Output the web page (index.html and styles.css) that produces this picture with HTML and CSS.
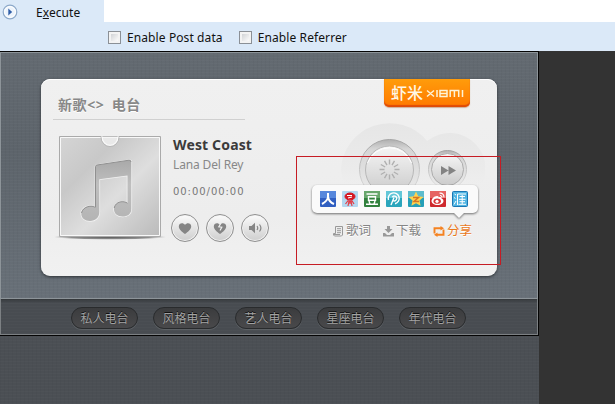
FILE: index.html
```html
<!DOCTYPE html>
<html lang="zh-CN">
<head>
<meta charset="utf-8">
<title>Player</title>
<link rel="stylesheet" href="styles.css">
</head>
<body>
<header class="toolbar">
  <div class="toolbar-main">
    <div class="execute">
      <svg width="16" height="16" viewBox="0 0 16 16"><circle cx="8" cy="8" r="6.8" fill="#edf4fc" stroke="#8da9c9" stroke-width="1.2"/><circle cx="8" cy="8" r="5.4" fill="none" stroke="#fff"/><path d="M6.3 4.4v7.2L10.2 8z" fill="#315fa8"/></svg>
      <span class="execute-label">E<u>x</u>ecute</span>
    </div>
    <div class="input-area"></div>
  </div>
  <div class="options">
    <label class="option"><i class="box"></i><span>Enable Post data</span></label>
    <label class="option"><i class="box"></i><span>Enable Referrer</span></label>
  </div>
</header>
<main class="page">
  <div class="app">
    <section class="stage">
      <div class="card">
        <div class="logo"><span class="logo-cn">虾米</span>
          <svg width="39" height="9" viewBox="0 0 39 9" fill="none" stroke="#fff3d6" stroke-width="1.5"><path d="M1 1.5l7 6M8 1.5l-7 6M11 1v7M14 1.6h7v6h-7zM14 4.6h7M24.2 8V1.6h8.5V8M28.4 1.6V8M36.5 1v7"/></svg>
        </div>
        <div class="info">
          <h1 class="station">新歌&lt;&gt; 电台</h1>
          <div class="now">
            <svg class="cover" width="114" height="106" viewBox="0 0 114 106">
              <defs>
                <linearGradient id="cv" x1="0" y1="0" x2="1" y2="1"><stop offset="0" stop-color="#d5d5d5"/><stop offset=".3" stop-color="#c8c8c8"/><stop offset=".58" stop-color="#dedede"/><stop offset="1" stop-color="#bababa"/></linearGradient>
                <linearGradient id="nt" x1="0" y1="0" x2="0" y2="1"><stop offset="0" stop-color="#a9a9a9"/><stop offset=".4" stop-color="#bfbfbf"/><stop offset="1" stop-color="#b4b4b4"/></linearGradient>
                <radialGradient id="sh"><stop offset="0" stop-color="#555"/><stop offset=".7" stop-color="#777" stop-opacity=".8"/><stop offset="1" stop-color="#999" stop-opacity="0"/></radialGradient>
              </defs>
              <ellipse cx="57" cy="102" rx="57" ry="2.8" fill="url(#sh)"/>
              <path d="M6.500 1.500h101v100h-101z" fill="url(#cv)" stroke="#aaa"/>
              <path d="M7.500 2.500h99v98h-99z" fill="none" stroke="#f8f8f8"/>
              <path d="M49 2a8 8.500 0 0 0 16 0z" fill="#e9e9e9" stroke="#fafafa" stroke-width="1.500"/><path d="M48 2a9 9.500 0 0 0 18 0M49.500 1.500h15" fill="none" stroke="#aaa" stroke-width=".7"/>
              <path d="M42.500 31.500Q42.500 30.200 44 30L76 25.200Q78.300 25 78.300 27V74C78.300 79 74.500 81.500 69.500 81.500C64.500 81.500 61 78.500 61 74.300C61 69.500 65 66.800 69.500 66.800Q72.500 66.800 74.500 68.200V40.500L46.300 44.300V77C46.300 82.500 42.500 86 37 86C32 86 28.300 83 28.300 79C28.300 74.500 32 71.200 37 71.200Q40.300 71.200 42.500 72.500Z" fill="url(#nt)" stroke="#f2f2f2" stroke-width="1.600" paint-order="stroke"/>
              <path d="M42.500 72V31.500Q42.500 30.200 44 30L76 25.200Q78 25 78 27M61.200 73C62.500 66 71 65.500 74.500 68.200M28.500 78C30 71 39 70 42.500 72.500" fill="none" stroke="#909090"/>
            </svg>
            <div class="song">
              <h2>West Coast</h2>
              <p class="artist">Lana Del Rey</p>
              <p class="time">00:00/00:00</p>
              <div class="actions">
                <span class="round"><svg width="14" height="13" viewBox="0 0 14 13"><path d="M7 12C4 10 .8 7.500.8 4.300C.8 1 5 0 7 2.800C9 0 13.200 1 13.200 4.300C13.200 7.500 10 10 7 12z" fill="#858585"/></svg></span>
                <span class="round"><svg width="14" height="13" viewBox="0 0 14 13"><path d="M7 12C4 10 .8 7.500.8 4.300C.8 1 5 0 7 2.800C9 0 13.200 1 13.200 4.300C13.200 7.500 10 10 7 12z" fill="#858585"/><path d="M7.500 2L5.800 4.800l3 .4L7 8.500" fill="none" stroke="#f0f0f0" stroke-width="1.200"/></svg></span>
                <span class="round"><svg width="15" height="12" viewBox="0 0 15 12"><path d="M1 4h2.500L7 .8v10.400L3.500 8H1z" fill="#858585"/><path d="M9 4q1.500 2 0 4M11.500 2.500q2.800 3.500 0 7" fill="none" stroke="#858585" stroke-width="1.200"/></svg></span>
              </div>
            </div>
          </div>
        </div>
        <div class="side">
          <svg class="controls" width="144" height="100" viewBox="0 0 144 100">
            <defs>
              <linearGradient id="hump" x1="0" y1="0" x2="0" y2="1"><stop offset="0" stop-color="#e6e6e6"/><stop offset=".5" stop-color="#ebebeb"/><stop offset=".7" stop-color="#ededed" stop-opacity="0"/></linearGradient>
              <linearGradient id="ring" x1="0" y1="0" x2="0" y2="1"><stop offset="0" stop-color="#b0b0b0"/><stop offset=".16" stop-color="#d6d6d6"/><stop offset="1" stop-color="#ededed"/></linearGradient>
              <linearGradient id="edge" x1="0" y1="0" x2="0" y2="1"><stop offset="0" stop-color="#a4a4a4"/><stop offset="1" stop-color="#e4e4e4"/></linearGradient>
              <linearGradient id="btn" x1="0" y1="0" x2="0" y2="1"><stop offset="0" stop-color="#f6f6f6"/><stop offset="1" stop-color="#cacaca"/></linearGradient>
            </defs>
            <path d="M0 50A48.500 48.500 0 0 1 86 21A36 36 0 1 1 86 77A48.500 48.500 0 0 1 0 50z" fill="url(#hump)"/>
            <circle cx="48.500" cy="49.500" r="30" fill="url(#ring)" stroke="url(#edge)"/>
            <circle cx="48.500" cy="50" r="24" fill="url(#btn)" stroke="#b8b8b8"/>
            <path d="M26.500 43A23.500 23.500 0 0 1 70.500 43" fill="none" stroke="#fff"/>
            <g stroke="#b0b0b0" stroke-width="1.400"><path d="M48.500 39.500v5M48.500 54.500v5"/><path d="M48.500 39.500v5M48.500 54.500v5" transform="rotate(30 48.500 49.500)"/><path d="M48.500 39.500v5M48.500 54.500v5" transform="rotate(60 48.500 49.500)"/><path d="M48.500 39.500v5M48.500 54.500v5" transform="rotate(90 48.500 49.500)"/><path d="M48.500 39.500v5M48.500 54.500v5" transform="rotate(120 48.500 49.500)"/><path d="M48.500 39.500v5M48.500 54.500v5" transform="rotate(150 48.500 49.500)"/></g>
            <circle cx="106.500" cy="49.500" r="19" fill="url(#ring)" stroke="url(#edge)"/>
            <circle cx="106.500" cy="49.500" r="16" fill="url(#btn)" stroke="#acacac"/>
            <path d="M100 46v9l7.500-4.500zM107.500 46v9l7.500-4.500z" fill="#838383"/>
          </svg>
          <nav class="links">
            <a><svg width="11" height="11" viewBox="0 0 11 11" fill="none" stroke="#999"><path d="M2.500.5h7v8.500l-1 1H1.500l-1-1V7.500h2zM4 2.700h4M4 4.700h4M4 6.700h4M1 8.500h6"/></svg>歌词</a>
            <a><svg width="11" height="11" viewBox="0 0 11 11"><path d="M4 0h3v3h2.500L5.500 7 1.500 3H4zM0 7h2l2 2h3l2-2h2v3.500H0z" fill="#999"/></svg>下载</a>
            <a class="active"><svg width="12" height="11" viewBox="0 0 12 11"><path d="M1.500 7.500V2.200H8M10.500 3.500v5.300H4" fill="none" stroke="#f58220" stroke-width="1.900"/><path d="M7.500 0l3.500 2.200-3.500 2.200zM4.500 6.600L1 8.800 4.500 11z" fill="#f58220"/></svg>分享</a>
          </nav>
        </div>
        <div class="share">
          <svg width="16" height="16" viewBox="0 0 16 16"><rect width="16" height="16" rx="1" fill="#315fc1"/><path d="M0 0h16v7H0z" fill="#5787dc"/><path d="M8 2v4Q7.500 10 2 13M8 6q1 5 6 7" fill="none" stroke="#fff" stroke-width="2"/></svg>
          <svg width="16" height="16" viewBox="0 0 16 16"><rect width="16" height="16" rx="1" fill="#b3d7ef"/><ellipse cx="8" cy="5.500" rx="5" ry="3.500" fill="#d51722" stroke="#d51722"/><path d="M5 4.500h5M6 7l4-1" stroke="#fff" stroke-width="1.200" fill="none"/><path d="M8 8v5M6.500 9L3.500 13M9.500 9l2.500 4M7 10l-1 5M9 10l1 5" stroke="#e33b44" stroke-width="1.200"/></svg>
          <svg width="16" height="16" viewBox="0 0 16 16"><rect width="16" height="16" rx="1" fill="#32813e"/><path d="M0 0h16v7H0z" fill="#68a66c"/><path d="M2.500 3h11M4.500 5.800h7v3.500h-7zM5 10l1 3M11 10l-1 3M2 13.300h12" fill="none" stroke="#fff" stroke-width="1.400"/></svg>
          <svg width="16" height="16" viewBox="0 0 16 16"><rect width="16" height="16" rx="1" fill="#2aa5bc"/><path d="M0 0h16v7H0z" fill="#64c7d8"/><path d="M2.500 9A5.500 5.500 0 1 1 9 12.700M5 14L8 6.500M7 9.500A2.400 2.400 0 1 0 6.200 6.200" fill="none" stroke="#fff" stroke-width="1.400"/></svg>
          <svg width="16" height="16" viewBox="0 0 16 16"><rect width="16" height="16" rx="1" fill="#259fb8"/><path d="M0 0h16v7H0z" fill="#5dbccd"/><path d="M8 .5l2.200 4.800 5.300.6-4 3.600 1.100 5.300L8 12.200l-4.600 2.600 1.100-5.300-4-3.600 5.300-.6z" fill="#ffd34f"/><path d="M5 6.500h5.500L6 10.500h5" stroke="#d47624" stroke-width="1.500" fill="none"/></svg>
          <svg width="16" height="16" viewBox="0 0 16 16"><rect width="16" height="16" rx="1" fill="#ce292d"/><path d="M0 0h16v7H0z" fill="#e66462"/><path d="M7 5c-3 0-5.500 3-5.500 5s2.500 4 6 4 6-2 6-4-2-2.500-2-2.500.3-2.500-3-1.200Q9 5 7 5z" fill="#fff"/><ellipse cx="7.200" cy="10.200" rx="3.700" ry="2.600" fill="#d8383a"/><circle cx="7" cy="10.300" r="1.600" fill="#fff"/><path d="M9.500 2.200Q14 1.800 14 6.500M10 4.500q2 0 2 2" fill="none" stroke="#fff" stroke-width="1.200"/></svg>
          <svg width="16" height="16" viewBox="0 0 16 16"><rect x=".5" y=".5" width="15" height="15" rx="1" fill="#4fb4e2" stroke="#1b77b4"/><path d="M2.500 3l1.500 1M2 6.500l1.500 1M2 13.500L4 10M5.500 14V3H14M7.500 5.500H13M10.200 4v9M7 8.300h6.500M7.500 10.700H13M6.500 13.300H14" fill="none" stroke="#fff"/></svg>
        </div>
      </div>
    </section>
    <nav class="stations"><a>私人电台</a><a>风格电台</a><a>艺人电台</a><a>星座电台</a><a>年代电台</a></nav>
    <div class="selection"></div>
  </div>
</main>
</body>
</html>
```
FILE: styles.css
```css
* { box-sizing: border-box; }
body {
  margin: 0;
  width: 615px;
  height: 404px;
  overflow: hidden;
  background: #333;
  font-family: "Noto Sans", "Noto Sans CJK SC", sans-serif;
}
h1, h2, p { margin: 0; }
svg { display: block; flex: none; }

.toolbar { height: 51px; background: #dbe9f8; color: #111; font-size: 12px; }
.toolbar-main { display: flex; height: 22px; }
.execute { display: flex; width: 104px; padding: 4px 0 0 2px; gap: 18px; }
.execute-label { line-height: 18px; letter-spacing: .05px; }
.execute-label u { text-underline-offset: 1px; }
.input-area { flex: 1; background: #fff; }
.options { display: flex; gap: 16px; padding: 7px 0 0 108px; }
.option { display: flex; gap: 6px; line-height: 18px; letter-spacing: .1px; }
.box {
  width: 13px;
  height: 13px;
  margin-top: 2px;
  border: 1px solid #8b9096;
  background: linear-gradient(135deg, #c5c8cc, #fafafa 80%);
  box-shadow: inset 0 0 0 2px #f3f3f3;
}

.page {
  width: 539px;
  height: 353px;
  background:
    repeating-linear-gradient(0deg, #ffffff04 0 1px, transparent 1px 3px),
    repeating-linear-gradient(90deg, #00000006 0 1px, transparent 1px 4px),
    #4b4f54;
}
.app {
  position: relative;
  height: 285px;
  border: solid #050505;
  border-width: 1px 1px 1px 0;
}
.stage {
  height: 247px;
  padding: 26px 0 0 40px;
  border: 1px solid #8d9499;
  background:
    repeating-linear-gradient(0deg, #ffffff05 0 1px, transparent 1px 3px),
    repeating-linear-gradient(90deg, #00000007 0 1px, transparent 1px 4px),
    linear-gradient(#636a71, #5d646b 40%, #687078);
}
.card {
  position: relative;
  display: flex;
  width: 456px;
  height: 197px;
  border-radius: 9px;
  background: linear-gradient(#f0f0f0, #ededed 70%, #f1f1f1);
  box-shadow: 0 1px 3px #24282cdd, inset 0 1px #fff;
}
.info { width: 250px; padding-left: 12px; }
.station {
  width: 192px;
  height: 41px;
  padding: 14px 0 0 5px;
  border-bottom: 1px solid #d0d0d0;
  font-size: 14px;
  line-height: 24px;
  font-weight: bold;
  letter-spacing: .6px;
  word-spacing: 3px;
  color: #888;
  text-shadow: 0 1px #fff;
  white-space: nowrap;
}
.now { display: flex; padding-top: 15px; }
.song { width: 110px; margin-left: 6px; white-space: nowrap; }
.song h2 { font: bold 14px/20px "Noto Sans", sans-serif; letter-spacing: .15px; color: #3b3b3b; }
.artist { font-size: 12px; line-height: 20px; letter-spacing: -.15px; color: #888; }
.time { margin-top: 8px; font: 10px/18px "DejaVu Sans", sans-serif; letter-spacing: .95px; color: #777; }
.actions { display: flex; gap: 7px; margin: 13px 0 0 -2px; }
.round {
  display: grid;
  flex: none;
  place-items: center;
  width: 28px;
  height: 28px;
  border: 1px solid #909090;
  border-radius: 50%;
  background: linear-gradient(#fbfbfb, #cecece);
  box-shadow: inset 0 0 0 1px #f4f4f4;
}
.side { padding: 41px 0 0 50px; }
.links {
  display: flex;
  gap: 12px;
  margin: 2px 0 0 -8px;
  color: #858585;
  font-size: 12.5px;
  line-height: 18px;
}
.links a { display: flex; align-items: center; gap: 2px; white-space: nowrap; text-shadow: 0 1px #fff; }
.links .active { color: #ea7a1c; }

.logo {
  position: absolute;
  left: 343px;
  top: 0;
  display: flex;
  align-items: center;
  gap: 3px;
  width: 86px;
  height: 28px;
  padding-left: 7px;
  border-radius: 0 0 5px 5px;
  background: linear-gradient(#ff9c0b, #ff7900);
  box-shadow: inset 0 -2px 1px #df4b08, 0 1px 1px #aa5a2870;
}
.logo-cn { font-size: 16px; line-height: 24px; font-weight: 500; color: #fff7e6; white-space: nowrap; }
.share {
  position: absolute;
  left: 271px;
  top: 106px;
  display: flex;
  gap: 6px;
  width: 166px;
  height: 28px;
  padding: 6px 8px;
  border-radius: 5px;
  background: #fafafa;
  filter: drop-shadow(0 1px 1px #0008);
}
.share::after {
  content: "";
  position: absolute;
  left: 141px;
  bottom: -5px;
  width: 12px;
  height: 6px;
  background: #fafafa;
  clip-path: polygon(0 0, 100% 0, 50% 100%);
}
.stations {
  display: flex;
  gap: 15px;
  height: 36px;
  padding: 8px 0 0 70px;
  border: solid #7c8083;
  border-width: 0 1px 1px;
  background:
    repeating-linear-gradient(0deg, #ffffff04 0 1px, transparent 1px 3px),
    linear-gradient(#33373a, #484c51 4px);
}
.stations a {
  width: 67px;
  height: 22px;
  border: 1px solid #292b2d;
  border-radius: 11px;
  background: linear-gradient(#3b3c3e, #49494b);
  box-shadow: 0 1px #5c6064;
  color: #a2a2a2;
  font-size: 12px;
  line-height: 21px;
  text-align: center;
  text-shadow: 0 -1px #111;
}
.selection {
  position: absolute;
  left: 296px;
  top: 104px;
  width: 205px;
  height: 109px;
  border: 1px solid #c61c24;
}
```
